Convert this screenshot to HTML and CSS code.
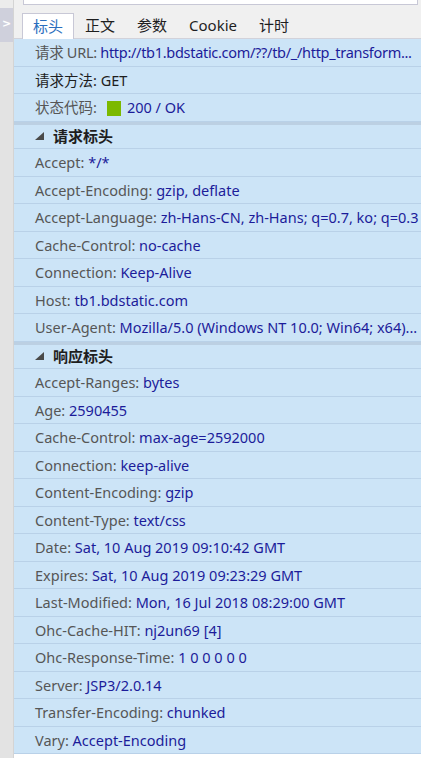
FILE: index.html
```html
<!DOCTYPE html>
<html lang="zh">
<head>
<meta charset="utf-8">
<title>Headers</title>
<link rel="stylesheet" href="styles.css">
</head>
<body>
<div class="app">
  <aside class="sidebar">
    <div class="side-top"></div>
    <div class="toggle">&gt;</div>
    <div class="side-rest"></div>
  </aside>
  <main class="main">
    <div class="top">
      <div class="search"></div>
      <nav class="tabs">
        <span class="tab active">标头</span>
        <span class="tab">正文</span>
        <span class="tab">参数</span>
        <span class="tab">Cookie</span>
        <span class="tab">计时</span>
      </nav>
    </div>
    <div class="content">
      <div class="row tight"><span class="k">请求 URL:</span> <span class="v">http://tb1.bdstatic.com/??/tb/_/http_transform...</span></div>
      <div class="row focus"><span class="k">请求方法:</span> <span class="v">GET</span></div>
      <div class="row"><span class="k">状态代码:</span><span class="status"></span><span class="v">200 / OK</span></div>
      <div class="band"></div>
      <div class="row head"><svg class="tri" width="9" height="8" viewBox="0 0 9 8"><polygon points="9,0 9,8 0,8" fill="#4a4a4a"/></svg><span>请求标头</span></div>
      <div class="row"><span class="k">Accept:</span> <span class="v">*/*</span></div>
      <div class="row"><span class="k">Accept-Encoding:</span> <span class="v">gzip, deflate</span></div>
      <div class="row"><span class="k">Accept-Language:</span> <span class="v">zh-Hans-CN, zh-Hans; q=0.7, ko; q=0.3</span></div>
      <div class="row"><span class="k">Cache-Control:</span> <span class="v">no-cache</span></div>
      <div class="row"><span class="k">Connection:</span> <span class="v">Keep-Alive</span></div>
      <div class="row"><span class="k">Host:</span> <span class="v">tb1.bdstatic.com</span></div>
      <div class="row"><span class="k">User-Agent:</span> <span class="v">Mozilla/5.0 (Windows NT 10.0; Win64; x64)...</span></div>
      <div class="band"></div>
      <div class="row head"><svg class="tri" width="9" height="8" viewBox="0 0 9 8"><polygon points="9,0 9,8 0,8" fill="#4a4a4a"/></svg><span>响应标头</span></div>
      <div class="row"><span class="k">Accept-Ranges:</span> <span class="v">bytes</span></div>
      <div class="row"><span class="k">Age:</span> <span class="v">2590455</span></div>
      <div class="row"><span class="k">Cache-Control:</span> <span class="v">max-age=2592000</span></div>
      <div class="row"><span class="k">Connection:</span> <span class="v">keep-alive</span></div>
      <div class="row"><span class="k">Content-Encoding:</span> <span class="v">gzip</span></div>
      <div class="row"><span class="k">Content-Type:</span> <span class="v">text/css</span></div>
      <div class="row"><span class="k">Date:</span> <span class="v">Sat, 10 Aug 2019 09:10:42 GMT</span></div>
      <div class="row"><span class="k">Expires:</span> <span class="v">Sat, 10 Aug 2019 09:23:29 GMT</span></div>
      <div class="row"><span class="k">Last-Modified:</span> <span class="v">Mon, 16 Jul 2018 08:29:00 GMT</span></div>
      <div class="row"><span class="k">Ohc-Cache-HIT:</span> <span class="v">nj2un69 [4]</span></div>
      <div class="row"><span class="k">Ohc-Response-Time:</span> <span class="v">1 0 0 0 0 0</span></div>
      <div class="row"><span class="k">Server:</span> <span class="v">JSP3/2.0.14</span></div>
      <div class="row"><span class="k">Transfer-Encoding:</span> <span class="v">chunked</span></div>
      <div class="row"><span class="k">Vary:</span> <span class="v">Accept-Encoding</span></div>
    </div>
  </main>
</div>
</body>
</html>
```
FILE: styles.css
```css
html, body {
  margin: 0;
  padding: 0;
  background: #ffffff;
}
body {
  width: 421px;
  height: 758px;
  overflow: hidden;
  font-family: "Noto Sans", "Noto Sans CJK SC", sans-serif;
  font-size: 14.5px;
}
.app {
  display: flex;
  height: 758px;
}
.sidebar {
  width: 13px;
  border-right: 1px solid #d4d4d4;
  display: flex;
  flex-direction: column;
  background: #e3e3e3;
}
.side-top {
  height: 8px;
  background: #ececec;
}
.toggle {
  height: 34px;
  background: #cfd0dc;
  color: #ffffff;
  font-family: "DejaVu Sans", sans-serif;
  font-size: 11px;
  font-weight: bold;
  line-height: 32px;
  text-align: center;
}
.side-rest {
  flex: 1;
}
.main {
  flex: 1;
  display: flex;
  flex-direction: column;
  min-width: 0;
}
.top {
  height: 38px;
  background: #f0f0f0;
  border-bottom: 1px solid #d2d2da;
  display: flex;
  flex-direction: column;
}
.search {
  height: 4px;
  margin: 0 3px 0 9px;
  background: #ffffff;
  border: 1px solid #c8c8d6;
  border-top: none;
}
.tabs {
  display: flex;
  margin-top: 8px;
  padding-left: 8px;
  flex: 1;
}
.tab {
  padding: 0 11px;
  line-height: 24px;
  font-size: 15px;
  color: #1e1e1e;
}
.tab.active {
  padding: 0 10px;
  background: #ffffff;
  border: 1px solid #c8c8d6;
  border-bottom: none;
  color: #2a6ebd;
  margin-bottom: -1px;
}
.content {
  display: flex;
  flex-direction: column;
}
.row {
  height: 25.5px;
  padding: 1px 2px 0 21px;
  line-height: 25.5px;
  border-bottom: 1px solid #b9d1e8;
  background: #cce4f7;
  white-space: nowrap;
  overflow: hidden;
  text-overflow: ellipsis;
  color: #565656;
}
.row.tight {
  padding-right: 0;
  letter-spacing: -0.3px;
}
.row .v {
  color: #1c1c9a;
}
.row.focus .k,
.row.focus .v {
  color: #1e1e1e;
}
.status {
  display: inline-block;
  width: 14px;
  height: 15px;
  background: #7cb900;
  vertical-align: -3px;
  margin: 0 6px 0 10px;
}
.band {
  height: 3px;
  background: #bcd0e3;
}
.row.head {
  height: 23.5px;
  padding-top: 0;
  line-height: 23.5px;
  display: flex;
  align-items: center;
  font-weight: bold;
  color: #1e1e1e;
  font-size: 15px;
}
.tri {
  margin-right: 9px;
  flex: none;
}
```
